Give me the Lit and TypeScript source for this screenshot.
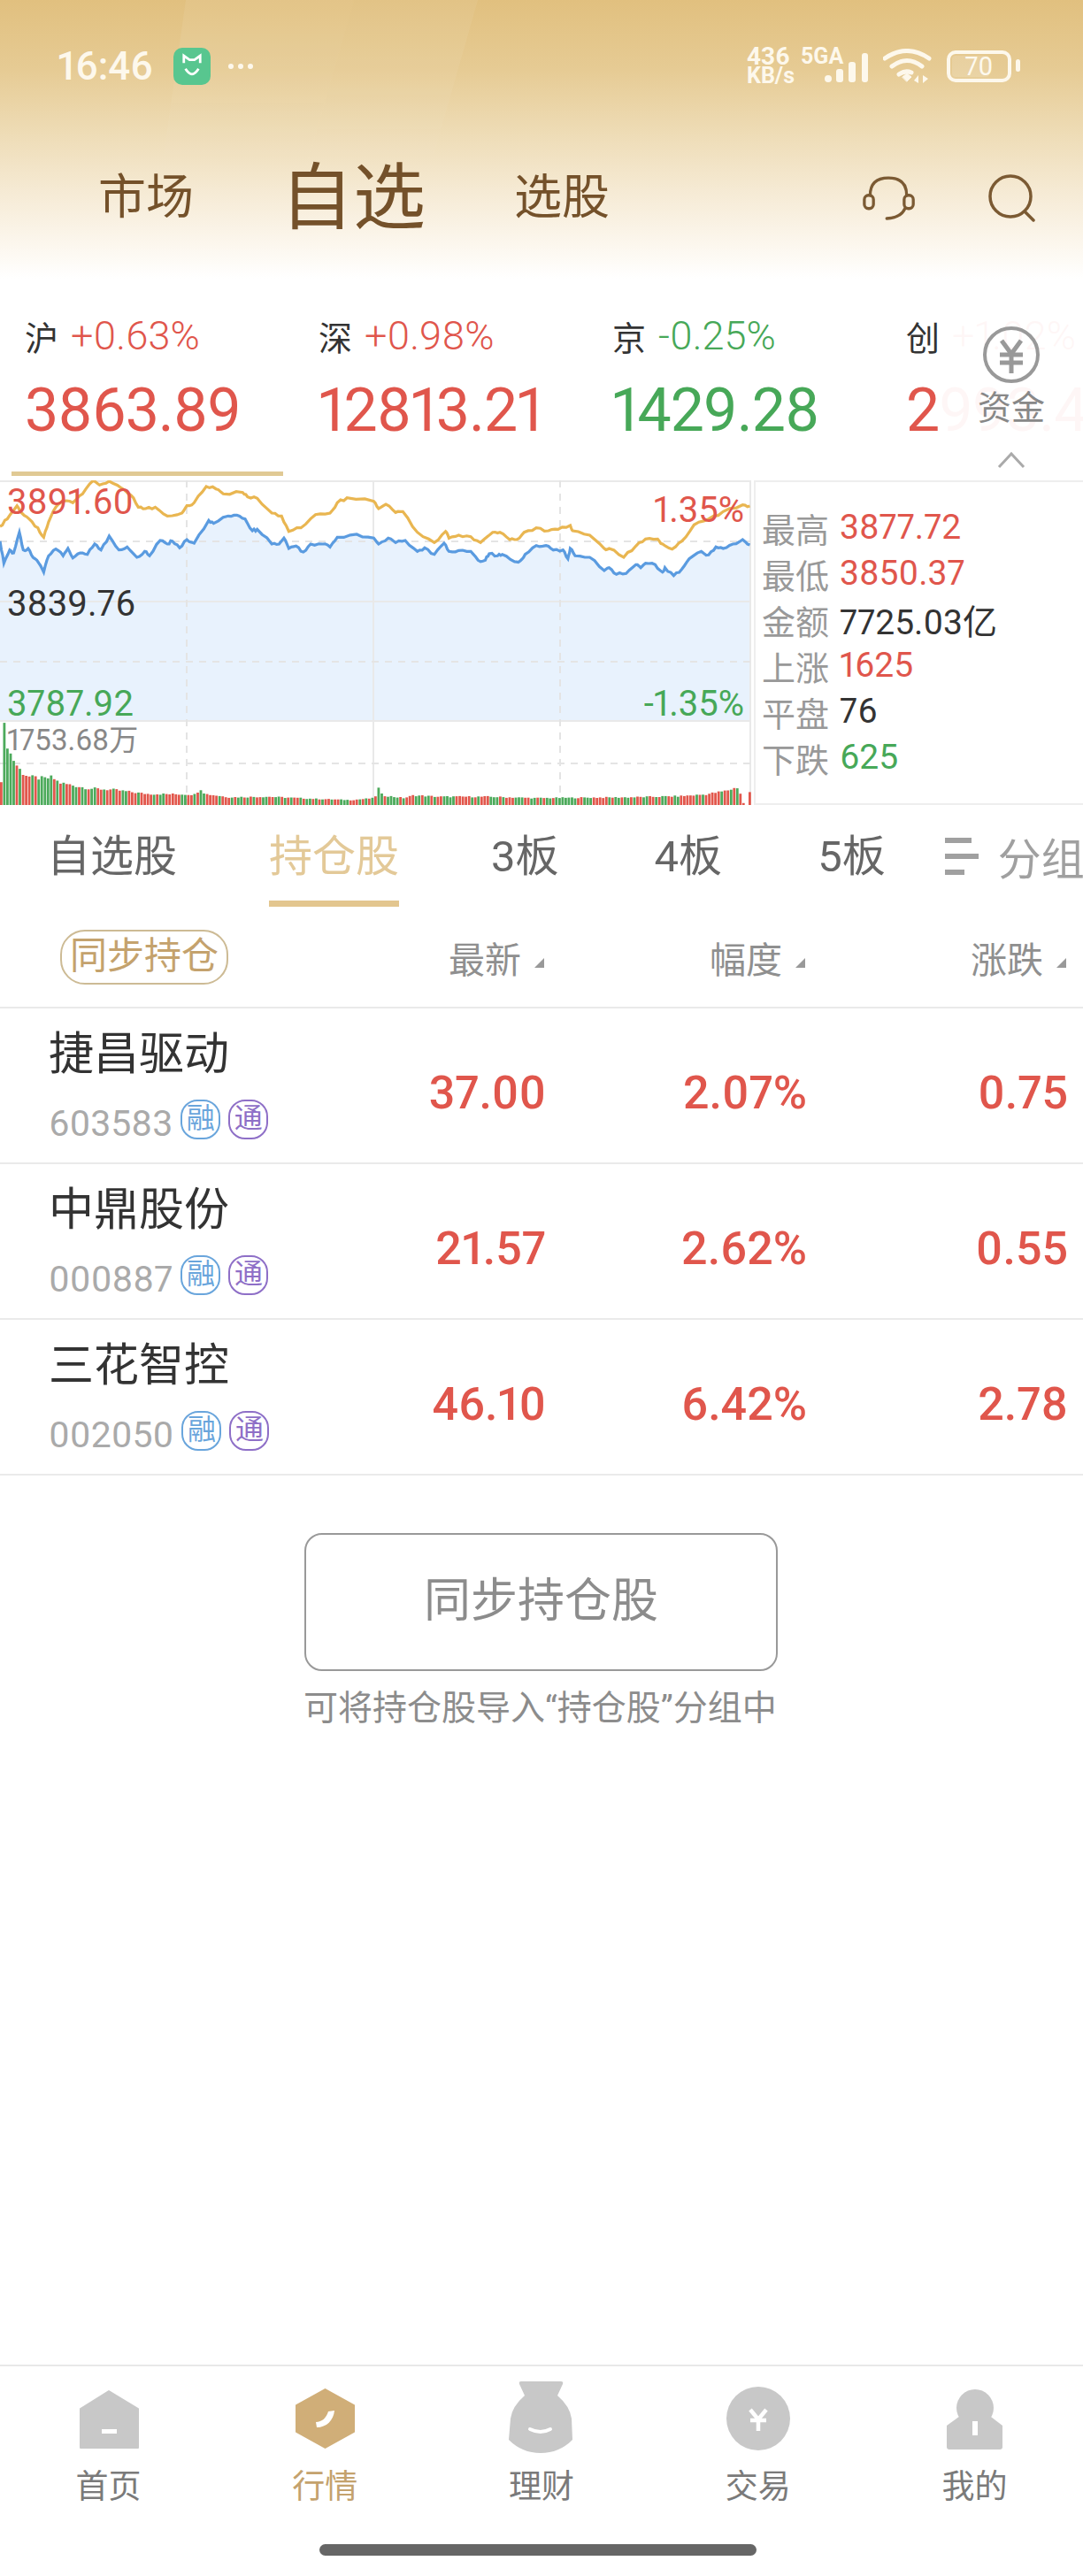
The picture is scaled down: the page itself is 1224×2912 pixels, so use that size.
import { css, html, LitElement, svg } from "lit";
import { customElement } from "lit/decorators.js";

// chart traces read off the reference, in chart pixels
const BLUE: number[][] = [[0,245],[8,320],[20,275],[28,285],[40,215],[48,275],[58,270],[68,300],[80,320],[90,350],[100,295],[115,272],[130,295],[140,270],[150,302],[165,285],[180,290],[195,255],[208,275],[225,228],[245,275],[262,265],[282,300],[298,280],[308,295],[330,243],[345,255],[355,245],[370,268],[385,240],[400,252],[430,175],[440,185],[470,160],[488,157],[505,170],[520,210],[530,205],[560,255],[575,255],[585,235],[595,270],[610,262],[625,282],[640,255],[665,255],[680,265],[695,232],[735,222],[770,235],[780,255],[800,235],[815,250],[835,243],[860,280],[875,268],[895,290],[915,252],[925,280],[945,277],[970,280],[985,310],[1000,310],[1008,288],[1025,295],[1035,290],[1060,315],[1072,312],[1082,290],[1105,260],[1125,260],[1140,275],[1160,275],[1170,305],[1175,270],[1185,295],[1215,300],[1245,345],[1255,335],[1270,358],[1290,355],[1310,325],[1320,335],[1330,320],[1350,325],[1365,350],[1370,335],[1388,362],[1405,340],[1420,305],[1445,280],[1460,292],[1475,265],[1490,270],[1510,255],[1530,240],[1545,258]];
const GOLD: number[][] = [[0,195],[15,170],[35,125],[45,150],[60,170],[78,200],[90,232],[100,180],[115,130],[130,110],[150,115],[170,85],[192,40],[205,55],[225,42],[250,65],[270,90],[285,130],[300,135],[320,130],[345,160],[375,150],[385,125],[400,115],[425,60],[445,68],[460,85],[500,80],[510,95],[530,100],[560,150],[580,160],[595,212],[620,200],[650,155],[680,150],[695,115],[715,98],[770,110],[780,135],[795,120],[815,148],[830,145],[860,215],[895,250],[918,212],[925,235],[945,225],[970,230],[990,250],[1015,215],[1030,215],[1050,240],[1065,240],[1080,215],[1105,200],[1130,210],[1150,205],[1175,192],[1180,210],[1215,225],[1245,270],[1255,270],[1285,300],[1310,262],[1330,238],[1355,238],[1365,255],[1385,272],[1405,245],[1430,190],[1460,170],[1490,145],[1530,122],[1545,126]];
const VOL: number[][] = [[0,90],[5,290],[12,225],[20,180],[35,135],[45,115],[60,100],[90,95],[105,100],[120,80],[150,70],[180,60],[230,55],[300,40],[400,38],[410,60],[420,40],[470,28],[550,30],[650,22],[720,18],[770,25],[776,65],[785,35],[830,25],[850,35],[900,30],[1000,30],[1100,25],[1300,28],[1400,32],[1450,38],[1490,50],[1520,65],[1527,10],[1535,0],[1540,0],[1545,100]];

const noise = (i: number) => {
  const v = Math.sin(i * 12.9898) * 43758.5453;
  return v - Math.floor(v);
};

const toPoints = (trace: number[][]) => {
  const out: string[] = [];
  trace.forEach(([x, y], i) => {
    const next = trace[i + 1];
    const steps = next ? 3 : 1;
    for (let s = 0; s < steps; s++) {
      const t = s / 3;
      const zx = next ? x + (next[0] - x) * t : x;
      const zy = next ? y + (next[1] - y) * t : y;
      const jitter = s === 0 ? 0 : (noise(i * 7 + s) - 0.5) * 3;
      out.push(`${(zx / 1.823).toFixed(1)},${(zy / 3 - 13 + jitter).toFixed(1)}`);
    }
  });
  return out.join(" ");
};

const volAt = (zx: number) => {
  for (let i = 0; i < VOL.length - 1; i++) {
    const [x0, y0] = VOL[i];
    const [x1, y1] = VOL[i + 1];
    if (zx >= x0 && zx <= x1) return y0 + ((y1 - y0) * (zx - x0)) / (x1 - x0 || 1);
  }
  return 0;
};

const INDICES = [
  { name: "沪", pct: "+0.63%", value: "3863.89", tone: "red" },
  { name: "深", pct: "+0.98%", value: "12813.21", tone: "red" },
  { name: "京", pct: "-0.25%", value: "1429.28", tone: "green" },
  { name: "创", pct: "+1.02%", value: "2993.44", tone: "red" },
];

const STATS = [
  { label: "最高", value: "3877.72", tone: "red" },
  { label: "最低", value: "3850.37", tone: "red" },
  { label: "金额", value: "7725.03亿", tone: "dark" },
  { label: "上涨", value: "1625", tone: "red" },
  { label: "平盘", value: "76", tone: "dark" },
  { label: "下跌", value: "625", tone: "green" },
];

const STOCKS = [
  { name: "捷昌驱动", code: "603583", price: "37.00", pct: "2.07%", diff: "0.75" },
  { name: "中鼎股份", code: "000887", price: "21.57", pct: "2.62%", diff: "0.55" },
  { name: "三花智控", code: "002050", price: "46.10", pct: "6.42%", diff: "2.78" },
];

const NAV_ICONS = [
  svg`<path d="M43 11 L11 31 V75 H76 V31 Z" fill="#c8c8c8" stroke="#c8c8c8" stroke-width="2" stroke-linejoin="round"/><rect x="35" y="54" width="17" height="5" fill="#fff"/>`,
  svg`<path d="M42.5 9 L75 27 V57 L42.5 75 L10 57 V27 Z" fill="#d0ae78" stroke="#d0ae78" stroke-width="2" stroke-linejoin="round"/><path d="M32 46 C39 46 44 41 46 34 L53 33 C52 44 44 52 33 52 Z" fill="#fff"/>`,
  svg`<path d="M19 0 H64 Q67 0 66 3 L60 16 Q74 28 76 42 L77 66 Q62 81 41 81 Q20 81 5 66 L7 42 Q9 28 23 16 L17 3 Q16 0 19 0 Z" fill="#c8c8c8"/><path d="M29 54 Q41 60 52 54" fill="none" stroke="#fff" stroke-width="4" stroke-linecap="round"/>`,
  svg`<circle cx="42" cy="42" r="36" fill="#c8c8c8"/><path d="M33 32 L42 43 L51 32 M33 44 H51 M42 43 V56" fill="none" stroke="#fff" stroke-width="4.5"/>`,
  svg`<circle cx="42" cy="30" r="21" fill="#c8c8c8"/><path d="M10 50 L28 37 H56 L73 50 V74 Q73 77 70 77 H13 Q10 77 10 74 Z" fill="#c8c8c8"/><rect x="39" y="45" width="6" height="16" fill="#fff"/>`,
];

const NAV = ["首页", "行情", "理财", "交易", "我的"];

@customElement("app-root")
export class AppRoot extends LitElement {
  static override styles = css`
    :host {
      display: flex;
      flex-direction: column;
      width: 1224px;
      height: 2912px;
      overflow: hidden;
      position: relative;
      background: #fff;
      color: #333;
      font-family: Roboto, "Noto Sans CJK SC", sans-serif;
      font-variant-numeric: proportional-nums;
    }

    .red { color: #e0564c; }
    .green { color: #47a858; }
    .dark { color: #333; }

    .top {
      position: relative;
      height: 315px;
      background: linear-gradient(180deg, #e1c07f 0%, #e6cb94 25%, #eedcb6 48%, #f6ebd6 70%, #fcf7ee 88%, #fff 100%);
    }
    .streak {
      position: absolute;
      top: 0;
      left: 180px;
      width: 370px;
      height: 210px;
      background: rgba(255, 255, 255, 0.07);
      clip-path: polygon(30px 0, 220px 0, 160px 100%, 0 100%);
      -webkit-mask-image: linear-gradient(180deg, #000 30%, transparent 100%);
    }
    .streak.b {
      background: rgba(255, 255, 255, 0.06);
      clip-path: polygon(220px 0, 360px 0, 300px 100%, 160px 100%);
    }

    .status {
      position: relative;
      display: flex;
      align-items: center;
      height: 60px;
      padding: 45px 0 0 65px;
      color: #fdf8ec;
    }
    .time { font-size: 44px; font-weight: 500; line-height: 60px; }
    .mi {
      display: flex;
      margin-left: 23px;
      width: 42px;
      height: 42px;
      border-radius: 10px;
      background: #58c68f;
      align-items: center;
      justify-content: center;
    }
    .dots { display: flex; gap: 5px; margin-left: 20px; }
    .dots i { width: 6px; height: 6px; border-radius: 50%; background: #fdf8ec; }
    .speed {
      margin-left: auto;
      width: 56px;
      font-size: 28px;
      font-weight: 700;
      line-height: 22px;
      white-space: nowrap;
    }
    .speed small { font-size: 25px; display: block; }
    .net { position: relative; display: block; margin-left: 32px; }
    .net span {
      position: absolute;
      left: -27px;
      top: -3px;
      font-size: 25px;
      font-weight: 700;
      line-height: 22px;
    }
    .net svg { display: block; margin-top: 4px; }
    .wifi { margin-left: 14px; }
    .battery {
      position: relative;
      box-sizing: border-box;
      width: 73px;
      height: 36px;
      margin: 0 81px 0 17px;
      border: 4px solid #fdf8ec;
      border-radius: 10px;
      text-align: center;
      font-size: 29px;
      line-height: 28px;
    }
    .battery::before {
      content: "";
      position: absolute;
      left: 2px;
      top: 2px;
      bottom: 2px;
      width: 42px;
      border-radius: 4px;
      background: rgba(255, 255, 255, 0.14);
    }
    .battery::after {
      content: "";
      position: absolute;
      right: -14px;
      top: 6px;
      width: 5px;
      height: 14px;
      border-radius: 3px;
      background: #fdf8ec;
    }

    .tabs {
      position: relative;
      display: flex;
      align-items: center;
      height: 120px;
      margin-top: 59px;
      padding-left: 111px;
      color: #74512a;
    }
    .tabs span { font-size: 54px; line-height: 120px; }
    .tabs .on { font-size: 82px; margin: 0 100px 0 98px; }
    .tabs svg { display: block; }
    .headset { margin-left: 286px; }
    .search { margin-left: 82px; }

    .indices {
      display: flex;
      box-sizing: border-box;
      height: 218px;
      padding: 40px 0 0 28px;
      overflow: hidden;
    }
    .idx { flex: 0 0 332px; }
    .idx-head { display: flex; align-items: center; height: 48px; }
    .idx-head b { font-weight: 400; font-size: 38px; color: #333; margin-right: 14px; }
    .idx-head span { font-size: 45px; font-weight: 300; }
    .idx-val { margin-top: 21px; font-size: 68px; letter-spacing: -1px; line-height: 80px; }

    .fade {
      position: absolute;
      left: 1062px;
      top: 345px;
      width: 162px;
      height: 190px;
      background: rgba(255, 255, 255, 0.95);
    }
    .funds {
      position: absolute;
      left: 1095px;
      top: 368px;
      width: 96px;
      text-align: center;
      color: #888;
      font-size: 38px;
      line-height: 46px;
    }
    .funds svg { display: block; margin: 0 auto; }
    .funds div { margin-top: 4px; }
    .funds .up { margin-top: 26px; }

    .marker {
      height: 5px;
      width: 307px;
      margin: 0 0 5px 13px;
      background: #e0c994;
    }

    .market { display: flex; height: 367px; }
    .chart {
      position: relative;
      flex: 0 0 849px;
      height: 367px;
    }
    .chart svg { display: block; }
    .chart span { position: absolute; white-space: nowrap; line-height: 40px; font-size: 40px; }
    .chart .vol-max { font-size: 33px; color: #888; }
    .stats {
      flex: 1;
      margin-left: 3px;
      box-sizing: border-box;
      padding: 25px 0 0 7px;
      border-top: 2px solid #eee;
      border-bottom: 2px solid #eee;
      border-left: 2px solid #eee;
    }
    .stat { display: flex; height: 52px; align-items: center; font-size: 39px; white-space: nowrap; }
    .stat b { font-weight: 400; font-size: 38px; color: #999; width: 88px; }

    .groups {
      display: flex;
      box-sizing: border-box;
      height: 115px;
      padding-left: 53px;
      color: #666;
      font-size: 49px;
      overflow: hidden;
    }
    .group {
      flex: none;
      box-sizing: border-box;
      height: 115px;
      margin-right: 104px;
      line-height: 117px;
      white-space: nowrap;
    }
    .group.on {
      color: #e3c998;
      border-bottom: 7px solid #e3c68f;
    }
    .group.small { margin-right: 108px; }
    .split {
      display: flex;
      flex: none;
      align-items: center;
      gap: 20px;
      height: 115px;
      margin-left: -41px;
      color: #a0a0a0;
      white-space: nowrap;
    }

    .grid {
      display: grid;
      grid-template-columns: 417px 200px 295px 295px;
      align-items: center;
      border-bottom: 2px solid #eaeaea;
      box-sizing: border-box;
    }
    .head { height: 115px; color: #8f8f8f; font-size: 41px; }
    .sync-pill {
      display: inline-block;
      box-sizing: border-box;
      margin-left: 68px;
      width: 190px;
      height: 62px;
      border: 2px solid #cdbb95;
      border-radius: 28px;
      color: #c4a26d;
      font-size: 42px;
      line-height: 56px;
      text-align: center;
      white-space: nowrap;
    }
    .sort { justify-self: end; display: flex; align-items: center; white-space: nowrap; }
    .sort i {
      width: 0;
      height: 0;
      margin: 14px 2px 0 15px;
      border-left: 11px solid transparent;
      border-bottom: 11px solid #999;
    }

    .row { height: 176px; }
    .who { padding-left: 55px; }
    .who h3 { margin: 0; font-weight: 400; font-size: 51px; line-height: 66px; color: #333; }
    .code { display: flex; align-items: center; height: 50px; margin-top: 20px; color: #aaa; font-size: 41px; }
    .tag {
      box-sizing: border-box;
      width: 45px;
      height: 45px;
      margin: -9px 0 0 9px;
      border: 2px solid currentColor;
      border-radius: 19px;
      font-size: 32px;
      line-height: 39px;
      text-align: center;
    }
    .tag.rong { color: #69a5dc; }
    .tag.tong { color: #8e6fc7; }
    .num {
      justify-self: end;
      padding-top: 16px;
      color: #e0564c;
      font-size: 52px;
      font-weight: 500;
    }

    .sync {
      box-sizing: border-box;
      align-self: flex-start;
      width: 535px;
      height: 156px;
      margin: 65px 0 0 344px;
      border: 2px solid #999;
      border-radius: 20px;
      color: #8c8c8c;
      font-size: 53px;
      line-height: 150px;
      text-align: center;
    }
    .hint {
      margin: 22px 0 0 343px;
      color: #8c8c8c;
      font-size: 39px;
      line-height: 40px;
      white-space: nowrap;
    }

    .nav {
      display: grid;
      grid-template-columns: repeat(5, 1fr);
      margin-top: auto;
      height: 184px;
      padding-top: 17px;
      border-top: 2px solid #e8e8e8;
    }
    .nav-item {
      display: flex;
      flex-direction: column;
      align-items: center;
      color: #7a7a7a;
      font-size: 37px;
      line-height: 44px;
    }
    .nav-item svg { display: block; margin-bottom: 16px; }
    .nav-item.on { color: #c4a26d; }
    .home-bar {
      width: 494px;
      height: 13px;
      margin: 0 0 23px 361px;
      border-radius: 7px;
      background: #666;
    }
  `;

  private renderChart() {
    const blue = toPoints(BLUE);
    const gold = toPoints(GOLD);
    const bars = [];
    for (let i = 0; i < 241; i++) {
      const x = i * 3.525;
      const env = volAt(x * 1.823);
      const h = (env * (0.86 + noise(i) * 0.16)) / 3;
      const color = noise(i + 100) > 0.5 ? "#e2574c" : "#4caa5b";
      const first = i < 2 ? (i === 0 ? "#e2574c" : "#4caa5b") : color;
      if (h > 0.5) {
        bars.push(svg`<rect x=${x.toFixed(1)} y=${(367 - h).toFixed(1)} width="2.8" height=${h.toFixed(1)} fill=${first}/>`);
      }
    }
    return html`
      <svg width="849" height="367" viewBox="0 0 849 367">
        <polygon points="0,272 ${blue} 848,272" fill="#e8f2fd"/>
        <path d="M0 1 H848 M848 0 V367 M0 137 H848 M0 272 H848 M422 0 V367" stroke="#e9e9e9" stroke-width="2" fill="none"/>
        <path d="M211 0 V367 M633 0 V367 M0 69 H848 M0 205 H848 M0 320 H848" stroke="#e4e4e4" stroke-width="2" stroke-dasharray="8 7" fill="none"/>
        ${bars}
        <polyline points=${gold} fill="none" stroke="#e9b651" stroke-width="3.2"/>
        <polyline points=${blue} fill="none" stroke="#5a9be0" stroke-width="3.2"/>
      </svg>
      <span class="red" style="left:8px;top:5px">3891.60</span>
      <span class="red" style="right:8px;top:14px">1.35%</span>
      <span class="dark" style="left:8px;top:120px">3839.76</span>
      <span class="green" style="left:8px;top:233px">3787.92</span>
      <span class="green" style="right:8px;top:233px">-1.35%</span>
      <span class="vol-max" style="left:8px;top:274px">1753.68万</span>
    `;
  }

  override render() {
    return html`
      <header class="top">
        <div class="streak"></div>
        <div class="streak b"></div>
        <div class="status">
          <span class="time">16:46</span>
          <span class="mi">
            <svg width="24" height="30" viewBox="0 0 26 32" fill="none" stroke="#fff" stroke-width="3">
              <path d="M3 12 L3 3 L10 8 L16 8 L23 3 L23 12"/>
              <path d="M5 19 Q13 32 21 19"/>
            </svg>
          </span>
          <span class="dots"><i></i><i></i><i></i></span>
          <span class="speed">436<small>KB/s</small></span>
          <span class="net">
            <span>5GA</span>
            <svg width="52" height="34" viewBox="0 0 52 34" fill="#fdf8ec">
              <rect x="0" y="25" width="8" height="8" rx="4"/>
              <rect x="13" y="18" width="8" height="15" rx="3"/>
              <rect x="27" y="10" width="8" height="23" rx="3"/>
              <rect x="42" y="0" width="7" height="33" rx="3"/>
            </svg>
          </span>
          <svg class="wifi" width="55" height="40" viewBox="0 0 55 40" fill="none" stroke="#fdf8ec" stroke-width="5" stroke-linecap="round">
            <path d="M2 11 Q27 -6 52 11"/>
            <path d="M10 20 Q27 7 44 20"/>
            <path d="M18 29 Q25 24 32 27"/>
            <path d="M22 32 L27 28 L32 32 L27 37 Z" fill="#fdf8ec" stroke-width="1"/>
            <path d="M40 30 V39 L35 36 Z M45 39 V30 L51 34 Z" fill="#fdf8ec" stroke="none"/>
          </svg>
          <span class="battery">70</span>
        </div>
        <nav class="tabs">
          <span>市场</span>
          <span class="on">自选</span>
          <span>选股</span>
          <svg class="headset" width="60" height="51" viewBox="0 0 64 54" fill="none" stroke="#7b5a33" stroke-width="3.5" stroke-linecap="round">
            <path d="M9 23 Q9 2 31 2 Q53 2 53 23"/>
            <rect x="2" y="23" width="11" height="16" rx="5"/>
            <rect x="50" y="23" width="11" height="16" rx="5"/>
            <path d="M51 39 Q46 50 29 51"/>
          </svg>
          <svg class="search" width="54" height="54" viewBox="0 0 54 54" fill="none" stroke="#7b5a33" stroke-width="3.5" stroke-linecap="round">
            <circle cx="25" cy="25" r="23"/>
            <path d="M41 42 L51 52"/>
          </svg>
        </nav>
      </header>

      <section class="indices">
        ${INDICES.map(
          (idx) => html`
            <div class="idx">
              <div class="idx-head"><b>${idx.name}</b><span class=${idx.tone}>${idx.pct}</span></div>
              <div class="idx-val ${idx.tone}">${idx.value}</div>
            </div>
          `,
        )}
      </section>
      <div class="fade"></div>
      <div class="funds">
        <svg width="66" height="66" viewBox="0 0 66 66" fill="none" stroke="#999" stroke-width="4">
          <circle cx="33" cy="33" r="30"/>
          <path stroke-width="5" d="M22 17 L33 32 L44 17 M20 33 H46 M20 42 H46 M33 32 V54"/>
        </svg>
        <div>资金</div>
        <svg class="up" width="32" height="20" viewBox="0 0 32 20" fill="none" stroke="#aaa" stroke-width="3">
          <path d="M2 18 L16 3 L30 18"/>
        </svg>
      </div>
      <div class="marker"></div>

      <section class="market">
        <div class="chart">${this.renderChart()}</div>
        <div class="stats">
          ${STATS.map(
            (s) => html`<div class="stat"><b>${s.label}</b><span class=${s.tone}>${s.value}</span></div>`,
          )}
        </div>
      </section>

      <section class="groups">
        <div class="group">自选股</div>
        <div class="group on">持仓股</div>
        <div class="group small">3板</div>
        <div class="group small">4板</div>
        <div class="group small">5板</div>
        <div class="split">
          <svg width="40" height="42" viewBox="0 0 40 42" fill="#a0a0a0">
            <rect x="0" y="0" width="30" height="6"/>
            <rect x="0" y="18" width="38" height="6"/>
            <rect x="0" y="36" width="22" height="6"/>
          </svg>
          分组
        </div>
      </section>

      <div class="grid head">
        <div><span class="sync-pill">同步持仓</span></div>
        <div class="sort">最新<i></i></div>
        <div class="sort">幅度<i></i></div>
        <div class="sort">涨跌<i></i></div>
      </div>

      ${STOCKS.map(
        (s) => html`
          <div class="grid row">
            <div class="who">
              <h3>${s.name}</h3>
              <div class="code">
                ${s.code}<span class="tag rong">融</span><span class="tag tong">通</span>
              </div>
            </div>
            <div class="num">${s.price}</div>
            <div class="num">${s.pct}</div>
            <div class="num">${s.diff}</div>
          </div>
        `,
      )}

      <div class="sync">同步持仓股</div>
      <div class="hint">可将持仓股导入“持仓股”分组中</div>

      <nav class="nav">
        ${NAV.map(
          (label, i) => html`
            <div class="nav-item ${i === 1 ? "on" : ""}">
              <svg width="84" height="82" viewBox="0 0 84 82">${NAV_ICONS[i]}</svg>
              ${label}
            </div>
          `,
        )}
      </nav>
      <div class="home-bar"></div>
    `;
  }
}
